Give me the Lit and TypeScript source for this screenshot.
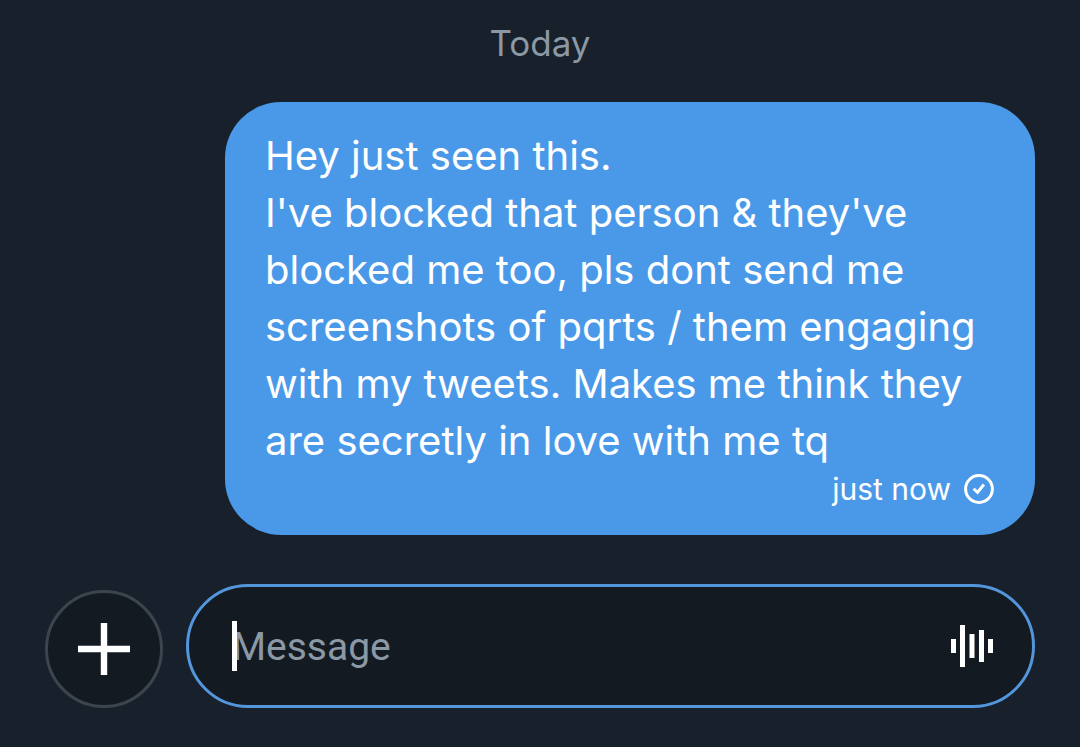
import { LitElement, html, css } from "lit";
import { customElement, state } from "lit/decorators.js";

@customElement("app-root")
export class AppRoot extends LitElement {
  @state() private draft = "";

  static styles = css`
    :host {
      display: block;
      min-height: 100vh;
      background: #18202b;
      color: #fff;
      font-family: Inter, "Liberation Sans", sans-serif;
    }
    * { box-sizing: border-box; }
    .screen {
      min-height: 100vh;
      display: flex;
      flex-direction: column;
      justify-content: space-between;
      gap: 48px;
      padding: 19px 45px 39px;
    }
    .day {
      margin: 0 0 35px;
      text-align: center;
      color: #8b98a5;
      font-size: 35px;
      font-weight: 400;
      line-height: 48px;
    }
    .bubble {
      margin-left: 180px;
      padding: 25px 40px 26px;
      border-radius: 56px;
      background: #4a99e9;
    }
    .text {
      margin: 0;
      white-space: pre-line;
      font-size: 40px;
      line-height: 57px;
    }
    .meta {
      display: flex;
      justify-content: flex-end;
      align-items: center;
      gap: 12px;
      font-size: 30px;
      line-height: 40px;
    }
    .composer { display: flex; align-items: flex-end; gap: 23px; }
    .add {
      flex: none;
      display: grid;
      place-items: center;
      width: 118px;
      height: 118px;
      padding: 0;
      border: 3px solid #3c444d;
      border-radius: 50%;
      background: #131a21;
      color: #fff;
    }
    .field {
      flex: 1;
      display: flex;
      align-items: center;
      gap: 16px;
      height: 124px;
      padding: 0 39px 0 43px;
      border: 3px solid #5396dc;
      border-radius: 62px;
      background: #131a21;
    }
    .entry { position: relative; flex: 1; display: flex; min-width: 0; }
    .caret {
      position: absolute;
      left: 0;
      top: 0;
      width: 5px;
      height: 50px;
      background: #fff;
    }
    input {
      flex: 1;
      min-width: 0;
      height: 50px;
      padding: 2px 0 0;
      border: 0;
      outline: 0;
      background: none;
      color: #fff;
      font: 39px Roboto, sans-serif;
    }
    input::placeholder { color: #8b98a5; opacity: 1; }
    .voice { padding: 0; border: 0; background: none; color: #fff; }
    svg { display: block; }
  `;

  private onInput(event: Event) {
    this.draft = (event.target as HTMLInputElement).value;
  }

  render() {
    return html`
      <main class="screen">
        <section>
          <h1 class="day">Today</h1>
          <article class="bubble">
            <p class="text">Hey just seen this.
I've blocked that person & they've blocked me too, pls dont send me screenshots of pqrts / them engaging with my tweets. Makes me think they are secretly in love with me tq</p>
            <div class="meta">
              <span>just now</span>
              <svg width="32" height="32" viewBox="0 0 32 32" fill="none" stroke="currentColor" aria-hidden="true">
                <circle cx="16" cy="16" r="13.4" stroke-width="3" />
                <path d="M10.600 15.800 L14.500 19.400 L20.900 11.500" stroke-width="2.9" />
              </svg>
            </div>
          </article>
        </section>
        <form class="composer" @submit=${(e: Event) => e.preventDefault()}>
          <button class="add" type="button" aria-label="Add attachment">
            <svg width="52" height="52" viewBox="0 0 52 52" fill="currentColor" aria-hidden="true">
              <path d="M22.800 0h6.400v22.800H52v6.400H29.200V52h-6.400V29.200H0v-6.400h22.800z" />
            </svg>
          </button>
          <div class="field">
            <div class="entry">
              <input type="text" aria-label="Message" placeholder="Message" .value=${this.draft} @input=${this.onInput} />
              ${this.draft ? null : html`<span class="caret"></span>`}
            </div>
            <button class="voice" type="button" aria-label="Record voice message">
              <svg width="42" height="42" viewBox="0 0 42 42" fill="currentColor" aria-hidden="true">
                <path d="M0 14h5v14H0zM9 0h5v42H9zM18.500 9h5v24h-5zM28 5h5v32h-5zM37 14h5v14h-5z" />
              </svg>
            </button>
          </div>
        </form>
      </main>`;
  }
}
